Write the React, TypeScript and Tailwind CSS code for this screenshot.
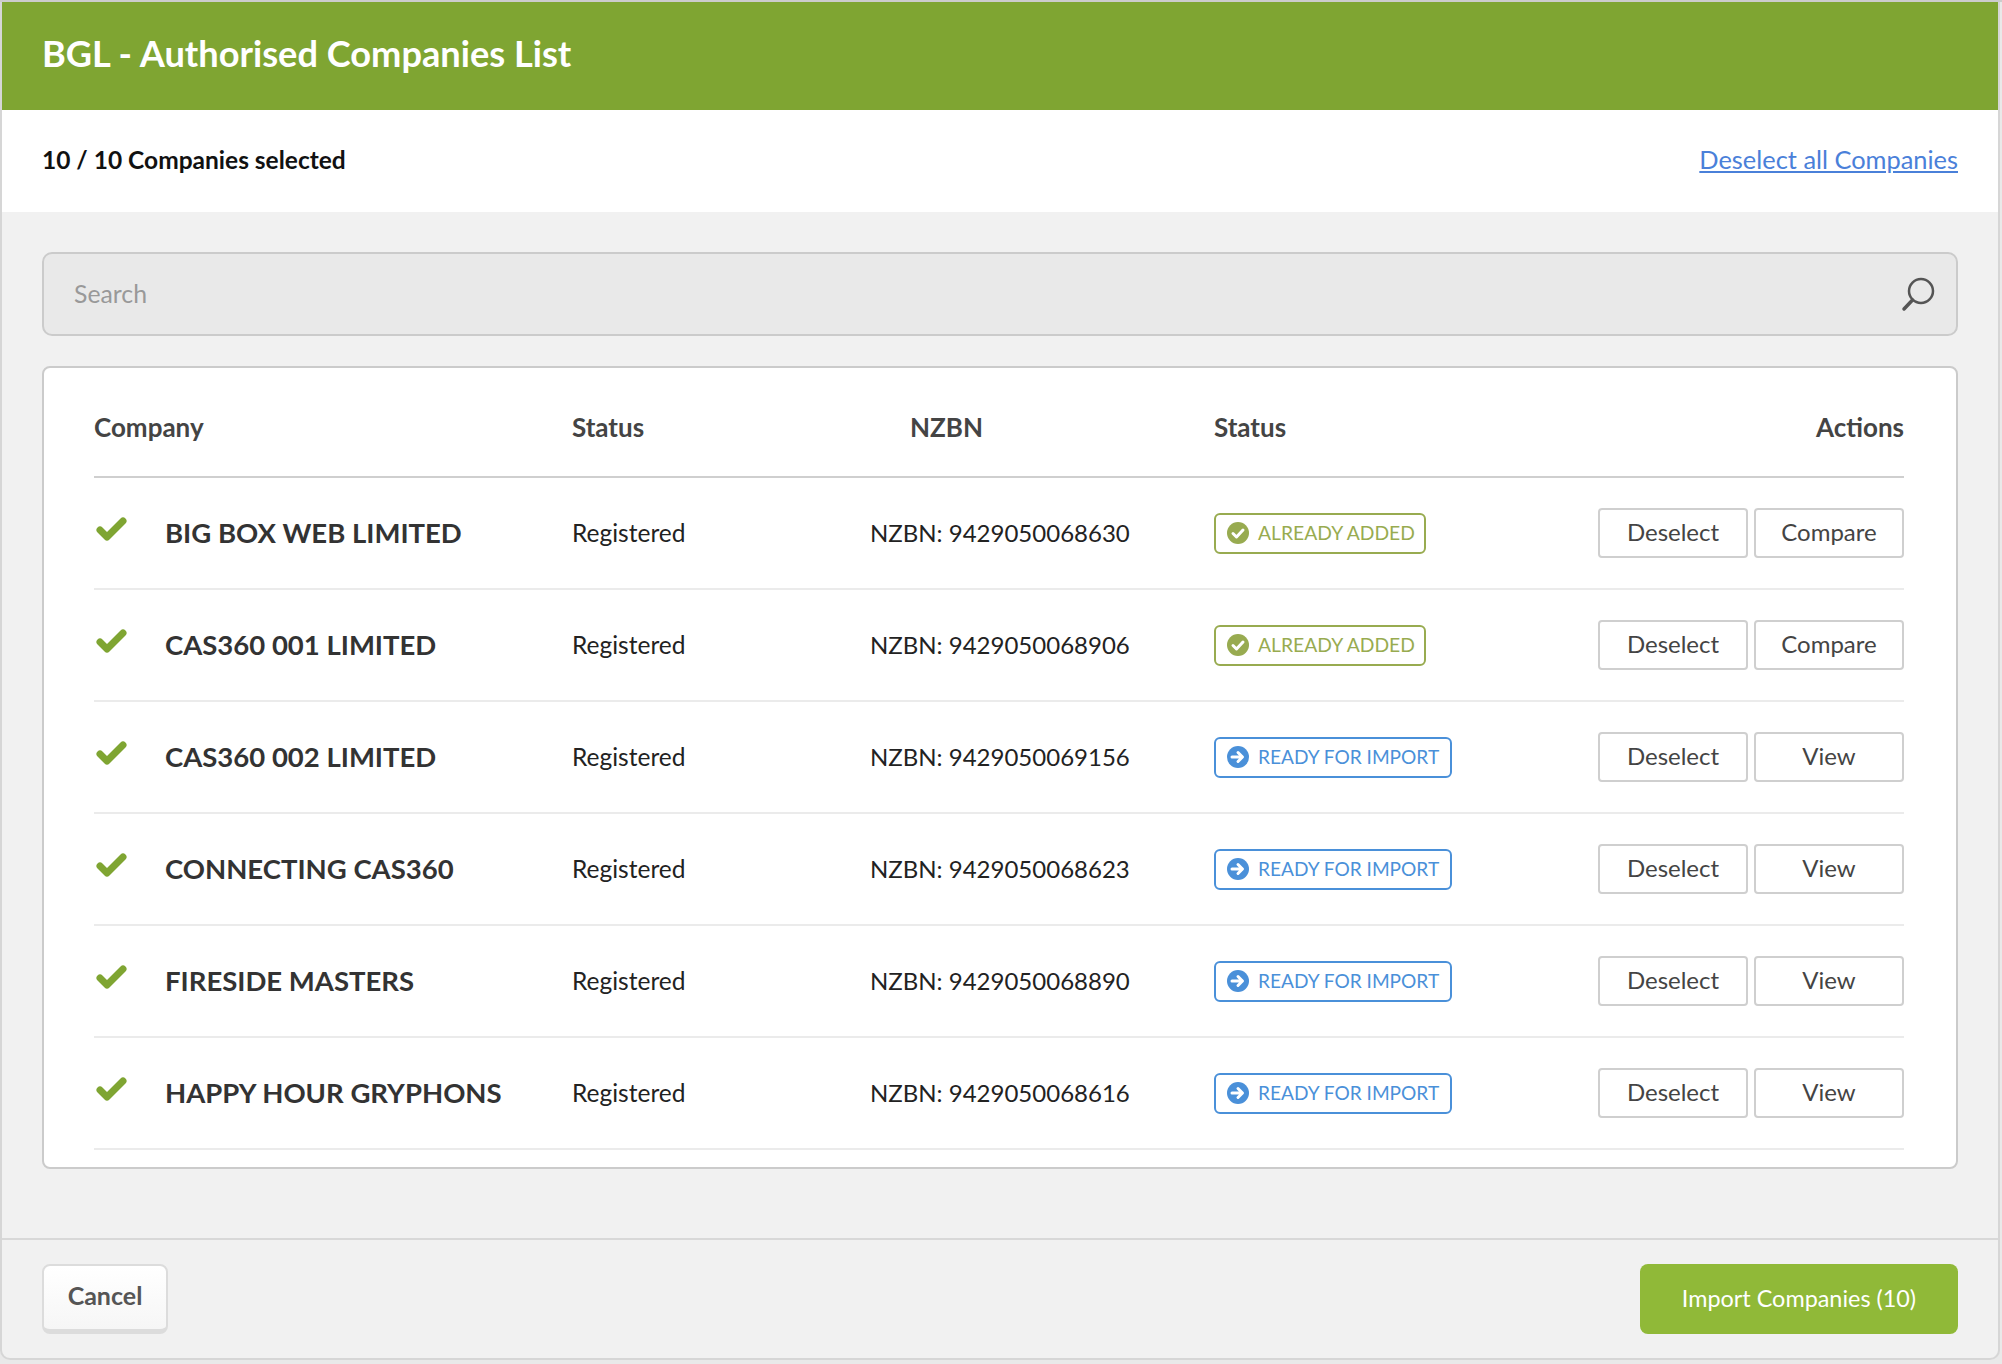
import React from 'react';

type Company = { name: string; nzbn: string; added: boolean };

const companies: Company[] = [
    { name: 'BIG BOX WEB LIMITED', nzbn: '9429050068630', added: true },
    { name: 'CAS360 001 LIMITED', nzbn: '9429050068906', added: true },
    { name: 'CAS360 002 LIMITED', nzbn: '9429050069156', added: false },
    { name: 'CONNECTING CAS360', nzbn: '9429050068623', added: false },
    { name: 'FIRESIDE MASTERS', nzbn: '9429050068890', added: false },
    { name: 'HAPPY HOUR GRYPHONS', nzbn: '9429050068616', added: false },
];

const CheckMark = () => (
    <svg width="34" height="30" viewBox="0 0 34 30" className="mb-[6px] block">
        <path d="M6 15 L13 22 L29 6" fill="none" stroke="#7fa532" strokeWidth="7" strokeLinejoin="round" strokeLinecap="round" />
    </svg>
);

const StatusBadge = ({ added }: { added: boolean }) =>
    added ? (
        <span className="inline-flex h-[41px] w-[212px] items-center gap-[9px] rounded-[6px] border-2 border-[#98ab50] pl-[11px] text-[19.3px] text-[#98ab50]">
            <svg width="22" height="22" viewBox="0 0 22 22" className="shrink-0">
                <circle cx="11" cy="11" r="11" fill="#98ab50" />
                <path d="M6 11.5 L9.5 15 L16 8" fill="none" stroke="#fff" strokeWidth="3" strokeLinecap="round" strokeLinejoin="round" />
            </svg>
            <span className="whitespace-nowrap">ALREADY ADDED</span>
        </span>
    ) : (
        <span className="inline-flex h-[41px] w-[238px] items-center gap-[9px] rounded-[6px] border-2 border-[#4a90d9] pl-[11px] text-[19.1px] text-[#4a90d9]">
            <svg width="22" height="22" viewBox="0 0 22 22" className="shrink-0">
                <circle cx="11" cy="11" r="11" fill="#4a90d9" />
                <path d="M5 11 H15 M11 6.5 L15.5 11 L11 15.5" fill="none" stroke="#fff" strokeWidth="3" strokeLinecap="round" strokeLinejoin="round" />
            </svg>
            <span className="whitespace-nowrap">READY FOR IMPORT</span>
        </span>
    );

const RowButton = ({ label }: { label: string }) => (
    <button className="h-[50px] w-[150px] rounded-[4px] border-2 border-[#cfcfcf] bg-white pb-[2px] text-[24px] text-[#444]">{label}</button>
);

const App = () => {
    return (
        <div className="h-[1364px] w-[2002px] overflow-hidden bg-[#e9e9e9] font-['Lato',sans-serif]">
            <div className="h-[2px] bg-[#cccccc]" />
            <div className="flex h-[1358px] w-[2000px] flex-col overflow-hidden rounded-b-[10px] border-x-2 border-b-2 border-[#d6d6d6] bg-[#f1f1f1]">
                <header className="flex h-[108px] shrink-0 items-center bg-[#7fa532] pb-[5px] pl-[40px]">
                    <h1 className="text-[36.2px] font-bold text-white">BGL - Authorised Companies List</h1>
                </header>

                <div className="flex h-[102px] shrink-0 items-center justify-between bg-white px-[40px] pb-[1px]">
                    <span className="text-[24.5px] font-bold text-[#111]">10 / 10 Companies selected</span>
                    <a href="#" className="pb-[2px] text-[25.4px] text-[#4a80d9] underline">
                        Deselect all Companies
                    </a>
                </div>

                <main className="flex-1 px-[40px] pt-[40px]">
                    <div className="flex h-[84px] items-center justify-between rounded-[10px] border-2 border-[#cbcbcb] bg-[#e9e9e9] pl-[30px] pr-[20px]">
                        <span className="text-[24.8px] text-[#999]">Search</span>
                        <svg width="36" height="36" viewBox="0 0 36 36">
                            <circle cx="21" cy="15" r="12" fill="none" stroke="#555" strokeWidth="2.5" />
                            <path d="M12.5 24 L4 33" stroke="#555" strokeWidth="3.5" strokeLinecap="round" />
                        </svg>
                    </div>

                    <div className="mt-[30px] h-[803px] overflow-hidden rounded-[8px] border-2 border-[#cbcbcb] bg-white pl-[50px] pr-[52px]">
                        <div className="grid h-[110px] grid-cols-[478px_298px_344px_1fr] items-center border-b-2 border-[#cfcfcf] pt-[10px] text-[26px] font-bold text-[#444]">
                            <span>Company</span>
                            <span>Status</span>
                            <span className="pl-[40px]">NZBN</span>
                            <div className="flex justify-between">
                                <span>Status</span>
                                <span>Actions</span>
                            </div>
                        </div>
                        {companies.map((c) => (
                            <div
                                key={c.nzbn}
                                className="grid h-[112px] grid-cols-[478px_298px_344px_1fr] items-center border-b-2 border-[#ebebeb]"
                            >
                                <div className="flex items-center">
                                    <span className="w-[71px] shrink-0">
                                        <CheckMark />
                                    </span>
                                    <span className="whitespace-nowrap pb-[1px] text-[27.5px] font-bold text-[#333]">{c.name}</span>
                                </div>
                                <span className="text-[24.5px] text-[#222]">Registered</span>
                                <span className="text-[24px] text-[#222]">NZBN: {c.nzbn}</span>
                                <div className="flex items-center justify-between">
                                    <StatusBadge added={c.added} />
                                    <div className="flex gap-[6px]">
                                        <RowButton label="Deselect" />
                                        <RowButton label={c.added ? 'Compare' : 'View'} />
                                    </div>
                                </div>
                            </div>
                        ))}
                    </div>
                </main>

                <footer className="flex h-[120px] shrink-0 items-start justify-between border-t-2 border-[#d8d8d8] px-[40px] pt-[24px]">
                    <button className="h-[70px] w-[126px] rounded-[8px] border-2 border-b-[5px] border-[#dcdcdc] bg-gradient-to-b from-white to-[#f6f6f6] pb-[4px] text-[25px] font-bold text-[#555]">
                        Cancel
                    </button>
                    <button className="h-[70px] w-[318px] rounded-[8px] bg-[#90b938] text-[23.4px] text-white">Import Companies (10)</button>
                </footer>
            </div>
        </div>
    );
};

export default App;
